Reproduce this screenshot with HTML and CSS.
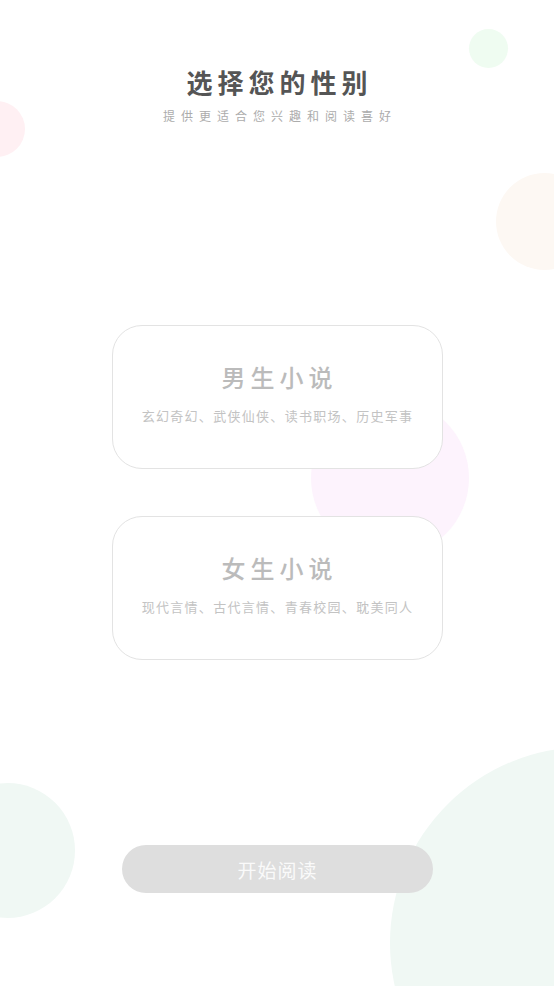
FILE: index.html
```html
<!DOCTYPE html>
<html lang="zh-CN">
<head>
<meta charset="utf-8">
<title>选择您的性别</title>
<link rel="stylesheet" href="styles.css">
</head>
<body>
<div class="page">
  <div class="bubble b-green-top"></div>
  <div class="bubble b-pink-left"></div>
  <div class="bubble b-peach-right"></div>
  <div class="bubble b-violet"></div>
  <div class="bubble b-green-left"></div>
  <div class="bubble b-green-right"></div>

  <main class="content">
    <header class="head">
      <h1 class="title">选择您的性别</h1>
      <p class="subtitle">提供更适合您兴趣和阅读喜好</p>
    </header>

    <section class="cards">
      <div class="card">
        <div class="card-title">男生小说</div>
        <div class="card-desc">玄幻奇幻、武侠仙侠、读书职场、历史军事</div>
      </div>
      <div class="card">
        <div class="card-title">女生小说</div>
        <div class="card-desc">现代言情、古代言情、青春校园、耽美同人</div>
      </div>
    </section>

    <button class="start" type="button">开始阅读</button>
  </main>
</div>
</body>
</html>
```

FILE: styles.css
```css
* { box-sizing: border-box; }

html, body {
  margin: 0;
  padding: 0;
  background: #ffffff;
}

body {
  font-family: "Noto Sans CJK SC", "Noto Sans", "Liberation Sans", sans-serif;
}

.page {
  position: relative;
  width: 554px;
  height: 986px;
  overflow: hidden;
  background: #ffffff;
}

.bubble {
  position: absolute;
  border-radius: 50%;
  z-index: 0;
}

.b-green-top {
  left: 469px;
  top: 29px;
  width: 39px;
  height: 39px;
  background: #effcf1;
}

.b-pink-left {
  left: -31px;
  top: 101px;
  width: 56px;
  height: 56px;
  background: #fff0f3;
}

.b-peach-right {
  left: 496px;
  top: 173px;
  width: 97px;
  height: 97px;
  background: #fdf8f3;
}

.b-violet {
  left: 311px;
  top: 399px;
  width: 158px;
  height: 158px;
  background: #fdf3fd;
}

.b-green-left {
  left: -60px;
  top: 783px;
  width: 135px;
  height: 135px;
  background: #f0f8f4;
}

.b-green-right {
  left: 390px;
  top: 747px;
  width: 392px;
  height: 392px;
  background: #f0f8f4;
}

.content {
  position: relative;
  z-index: 1;
  display: flex;
  flex-direction: column;
  align-items: center;
  padding-top: 67px;
}

.head {
  display: flex;
  flex-direction: column;
  align-items: center;
  gap: 11px;
}

.title {
  margin: 0;
  padding-left: 5px;
  font-size: 26px;
  line-height: 30px;
  font-weight: 700;
  letter-spacing: 5px;
  color: #555555;
}

.subtitle {
  margin: 0;
  padding-left: 6px;
  font-size: 12px;
  line-height: 16px;
  letter-spacing: 6px;
  color: #acacac;
}

.cards {
  margin-top: 201px;
  display: flex;
  flex-direction: column;
  gap: 47px;
}

.card {
  width: 331px;
  height: 144px;
  border: 1px solid #e3e3e3;
  border-radius: 30px;
  background: #ffffff;
  display: flex;
  flex-direction: column;
  align-items: center;
  padding-top: 36px;
  gap: 15px;
}

.card-title {
  padding-left: 5px;
  font-size: 24px;
  line-height: 30px;
  font-weight: 500;
  letter-spacing: 5px;
  color: #bbbbbb;
}

.card-desc {
  padding-left: 1px;
  font-size: 13px;
  line-height: 18px;
  letter-spacing: 1.3px;
  color: #c3c3c3;
}

.start {
  margin-top: 185px;
  width: 311px;
  height: 48px;
  border: none;
  border-radius: 24px;
  background: #dedede;
  color: #fafafa;
  font-family: "Noto Sans CJK SC", "Noto Sans", sans-serif;
  font-size: 19px;
  letter-spacing: 1px;
  padding: 0 0 0 1px;
}
```
